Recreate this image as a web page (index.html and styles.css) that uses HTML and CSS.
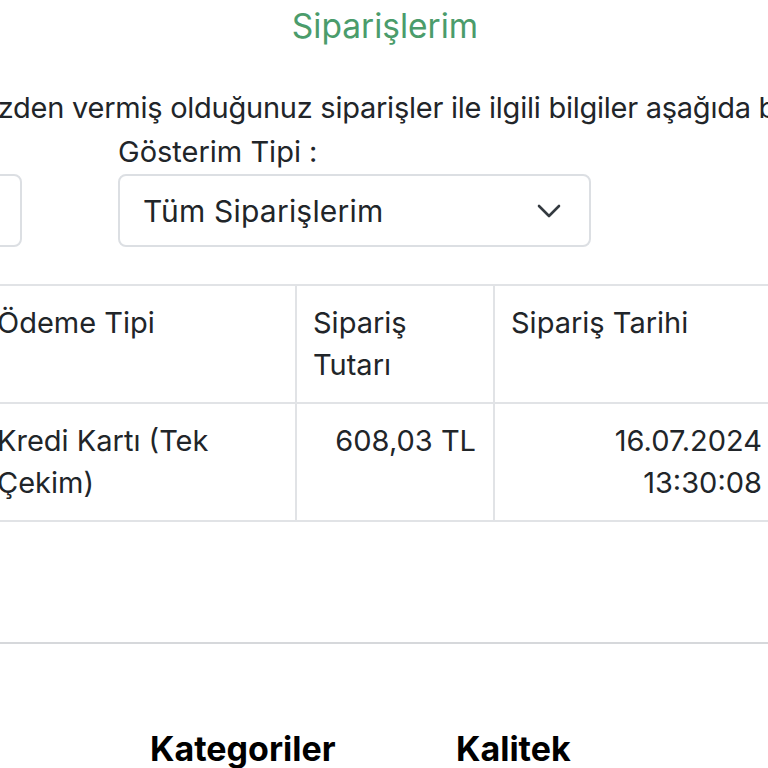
FILE: index.html
```html
<!DOCTYPE html>
<html lang="tr">
<head>
<meta charset="utf-8">
<title>Siparişlerim</title>
<link rel="stylesheet" href="styles.css">
</head>
<body>
<div class="viewport">
  <main class="page">
    <h1 class="title">Siparişlerim</h1>
    <p class="intro">Sitemizden vermiş olduğunuz siparişler ile ilgili bilgiler aşağıda bulunmaktadır.</p>

    <div class="filters">
      <div class="field field-left">
        <span class="label label-empty"></span>
        <div class="box"></div>
      </div>
      <div class="field field-type">
        <span class="label">Gösterim Tipi :</span>
        <div class="select">
          <span class="select-text">Tüm Siparişlerim</span>
          <svg class="chevron" width="24" height="14" viewBox="0 0 24 14" aria-hidden="true">
            <polyline points="2,2 12,12 22,2" fill="none" stroke="#343a40" stroke-width="2.6" stroke-linecap="round" stroke-linejoin="round"/>
          </svg>
        </div>
      </div>
    </div>

    <table class="orders">
      <colgroup>
        <col class="c-pay">
        <col class="c-amount">
        <col class="c-date">
      </colgroup>
      <thead>
        <tr>
          <th>Ödeme Tipi</th>
          <th>Sipariş Tutarı</th>
          <th>Sipariş Tarihi</th>
        </tr>
      </thead>
      <tbody>
        <tr>
          <td>Kredi Kartı (Tek Çekim)</td>
          <td class="num">608,03 TL</td>
          <td class="num">16.07.2024<br>13:30:08</td>
        </tr>
      </tbody>
    </table>

    <hr class="divider">

    <footer class="footer">
      <h2 class="foot-title">Kategoriler</h2>
      <h2 class="foot-title">Kalitek</h2>
    </footer>
  </main>
</div>
</body>
</html>
```

FILE: styles.css
```css
html, body {
  margin: 0;
  padding: 0;
  background: #ffffff;
}

.viewport {
  width: 768px;
  height: 768px;
  overflow: hidden;
}

.page {
  font-family: Inter, "Noto Sans", "Liberation Sans", sans-serif;
  color: #212529;
  font-size: 29px;
  line-height: 42px;
}

.title {
  margin: 0;
  padding-top: 6px;
  font-size: 33.5px;
  line-height: 40px;
  font-weight: 400;
  color: #4b9c6b;
  text-align: center;
  width: 770px;
}

.intro {
  margin: 41px 0 0 -2.93em;
  white-space: nowrap;
  letter-spacing: -0.25px;
}

.filters {
  display: flex;
  gap: 96px;
  margin-top: 2px;
}

.field {
  display: flex;
  flex-direction: column;
}

.label {
  display: block;
  height: 42px;
  margin-bottom: 1px;
  white-space: nowrap;
}

.field-left {
  margin-left: -278px;
}

.box {
  width: 296px;
  height: 69px;
  border: 2px solid #dcdfe3;
  border-radius: 8px;
}

.select {
  width: 418px;
  height: 69px;
  border: 2px solid #dcdfe3;
  border-radius: 8px;
  display: flex;
  align-items: center;
  justify-content: space-between;
  padding: 0 28px 0 23px;
}

.select-text {
  font-size: 30px;
  letter-spacing: 0.2px;
}

.chevron {
  display: block;
}

.orders {
  margin-top: 37px;
  margin-left: -21px;
  border-collapse: collapse;
  table-layout: fixed;
  width: 800px;
}

.c-pay { width: 316px; }
.c-amount { width: 198px; }
.c-date { width: 286px; }

.orders th,
.orders td {
  border: 2px solid #e1e3e6;
  padding: 16px 17px 16px 16px;
  vertical-align: top;
  text-align: left;
  font-weight: 400;
}

.orders td.num {
  text-align: right;
}

.divider {
  margin: 120px 0 0 0;
  border: 0;
  height: 2px;
  background: #d6d8db;
}

.footer {
  display: grid;
  grid-template-columns: 306px 306px;
  padding-left: 150px;
  margin-top: 85px;
}

.foot-title {
  margin: 0;
  font-size: 34px;
  line-height: 40px;
  font-weight: 700;
  color: #000;
}
```
